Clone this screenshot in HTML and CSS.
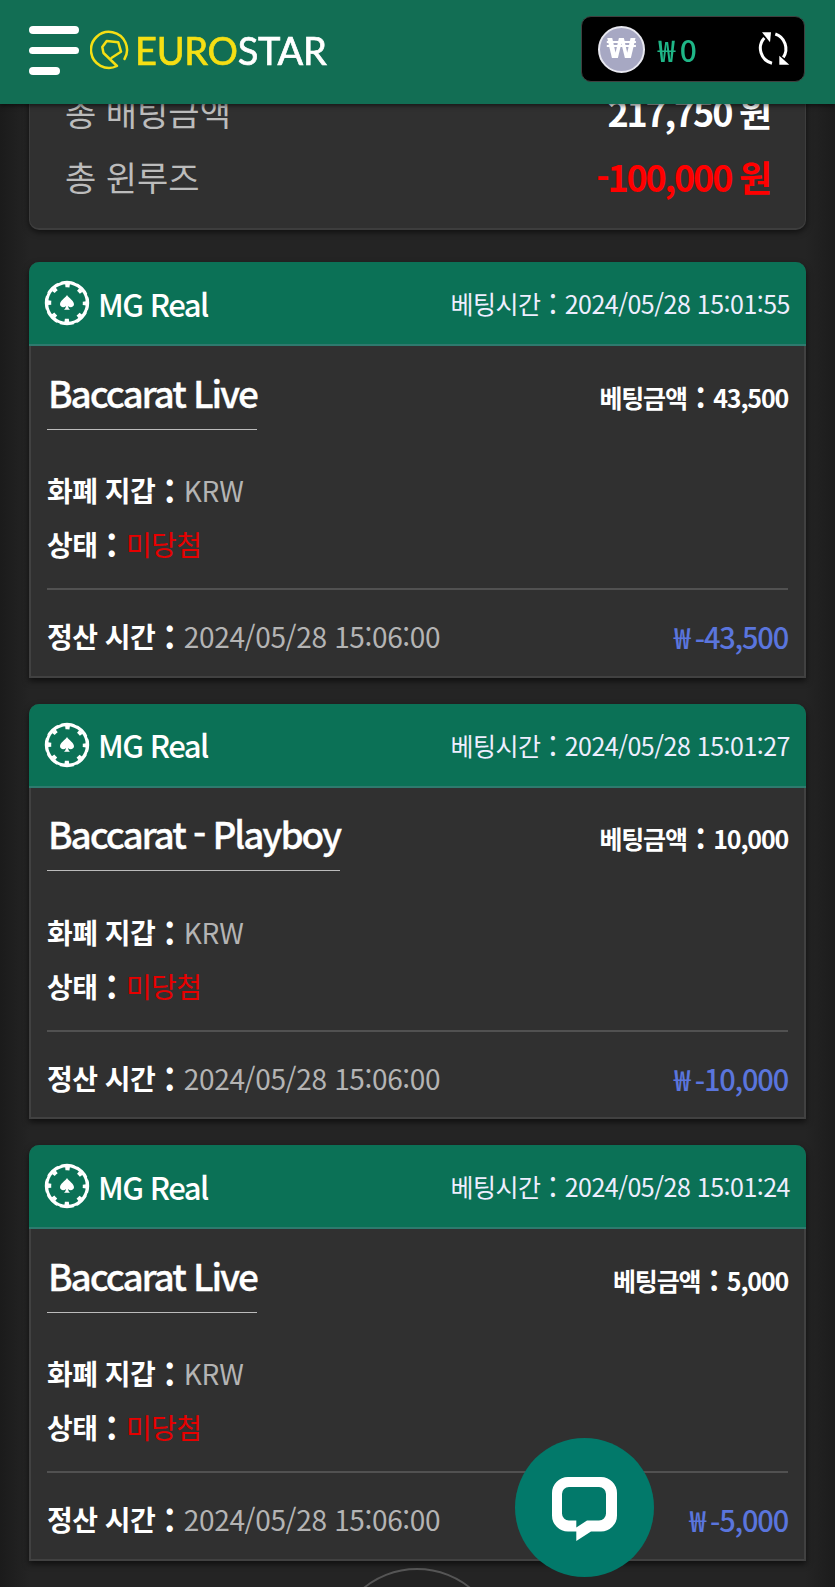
FILE: index.html
```html
<!DOCTYPE html>
<html lang="ko">
<head>
<meta charset="utf-8">
<title>EUROSTAR</title>
<link rel="stylesheet" href="styles.css">
</head>
<body>
<header class="topbar">
  <div class="menu"><span class="menu-line"></span><span class="menu-line"></span><span class="menu-line short"></span></div>
  <svg class="logo-mark" viewBox="0 0 40 40"><path d="M34.500 29A18 18 0 1 0 27 36L13.500 23 12.300 17 16.700 11 28.300 12.300 31 21.700 21.700 27.700" fill="none" stroke="#f5df14" stroke-width="2.500" stroke-linejoin="round" stroke-linecap="round"/></svg>
  <div class="logo-text"><span class="logo-euro">EURO</span><span class="logo-star">STAR</span></div>
  <div class="balance">
    <div class="coin">₩</div>
    <div class="amount">₩ 0</div>
    <svg class="refresh" viewBox="0 0 36 36"><path d="M7.300 7A15.500 15.500 0 0 0 15 32.300" fill="none" stroke="#fff" stroke-width="3"/><path d="M5 1.300h9l-1 10z" fill="#fff"/><path d="M18.300 3A15.500 15.500 0 0 1 26.300 26.300" fill="none" stroke="#fff" stroke-width="3"/><path d="M32.300 33.700h-10v-9z" fill="#fff"/></svg>
  </div>
</header>

<main class="page">
  <section class="summary">
    <div class="sum-row"><span class="sum-label">총 배팅금액</span><span class="sum-value">217,750 원</span></div>
    <div class="sum-row"><span class="sum-label">총 윈루즈</span><span class="sum-value loss">-100,000 원</span></div>
  </section>

  <article class="card">
    <div class="card-head">
      <div class="provider">
        <svg class="chip" viewBox="0 0 46 46"><use href="#chip-art"/></svg>
        <span>MG Real</span>
      </div>
      <div class="bet-time">베팅시간<span class="colon">:</span>2024/05/28 15:01:55</div>
    </div>
    <div class="card-body">
      <div class="title-row"><h2 class="game">Baccarat Live</h2><div class="stake">베팅금액<span class="colon">:</span>43,500</div></div>
      <div class="info"><b>화폐 지갑</b><span class="colon">:</span><span class="muted">KRW</span></div>
      <div class="info status"><b>상태</b><span class="colon">:</span><span class="lost">미당첨</span></div>
      <div class="card-foot"><div class="info"><b>정산 시간</b><span class="colon">:</span><span class="muted">2024/05/28 15:06:00</span></div><div class="result">₩ -43,500</div></div>
    </div>
  </article>

  <article class="card">
    <div class="card-head">
      <div class="provider">
        <svg class="chip" viewBox="0 0 46 46"><use href="#chip-art"/></svg>
        <span>MG Real</span>
      </div>
      <div class="bet-time">베팅시간<span class="colon">:</span>2024/05/28 15:01:27</div>
    </div>
    <div class="card-body">
      <div class="title-row"><h2 class="game">Baccarat - Playboy</h2><div class="stake">베팅금액<span class="colon">:</span>10,000</div></div>
      <div class="info"><b>화폐 지갑</b><span class="colon">:</span><span class="muted">KRW</span></div>
      <div class="info status"><b>상태</b><span class="colon">:</span><span class="lost">미당첨</span></div>
      <div class="card-foot"><div class="info"><b>정산 시간</b><span class="colon">:</span><span class="muted">2024/05/28 15:06:00</span></div><div class="result">₩ -10,000</div></div>
    </div>
  </article>

  <article class="card">
    <div class="card-head">
      <div class="provider">
        <svg class="chip" viewBox="0 0 46 46"><use href="#chip-art"/></svg>
        <span>MG Real</span>
      </div>
      <div class="bet-time">베팅시간<span class="colon">:</span>2024/05/28 15:01:24</div>
    </div>
    <div class="card-body">
      <div class="title-row"><h2 class="game">Baccarat Live</h2><div class="stake">베팅금액<span class="colon">:</span>5,000</div></div>
      <div class="info"><b>화폐 지갑</b><span class="colon">:</span><span class="muted">KRW</span></div>
      <div class="info status"><b>상태</b><span class="colon">:</span><span class="lost">미당첨</span></div>
      <div class="card-foot"><div class="info"><b>정산 시간</b><span class="colon">:</span><span class="muted">2024/05/28 15:06:00</span></div><div class="result">₩ -5,000</div></div>
    </div>
  </article>

  <div class="card-head next"></div>
</main>

<div class="top-btn"></div>
<div class="chat">
  <svg class="chat-icon" viewBox="0 0 66 66"><path fill-rule="evenodd" fill="#fff" d="M16 0H49a16 16 0 0 1 16 16V38.500a16 16 0 0 1-16 16H39L24.300 64V54.500H16a16 16 0 0 1-16-16V16A16 16 0 0 1 16 0zM17 10a7 7 0 0 0-7 7V36.500a7 7 0 0 0 7 7H24.300V50.500L35 43.500H47a7 7 0 0 0 7-7V17a7 7 0 0 0-7-7z"/></svg>
</div>

<svg class="defs" width="0" height="0">
  <defs>
    <g id="chip-art">
      <circle cx="23" cy="23" r="20.500" fill="none" stroke="#fff" stroke-width="3.400"/>
      <circle cx="23" cy="23" r="17.500" fill="none" stroke="#fff" stroke-width="3.400" stroke-dasharray="4.500 9.240" stroke-dashoffset="2.250"/>
      <circle cx="23" cy="23" r="22.500" fill="none" stroke="#0b7156" stroke-width="1.400" stroke-dasharray="3 14.670" stroke-dashoffset="-7.300"/>
      <path fill="#fff" d="M23 15c1.800 3.200 7 5.600 7 9.300 0 2.800-3.800 3.900-5.900 1.700.2 1.600.7 2.900 1.900 3.800h-6c1.200-.9 1.700-2.200 1.900-3.800-2.100 2.200-5.900 1.100-5.900-1.700 0-3.700 5.200-6.100 7-9.300z"/>
    </g>
  </defs>
</svg>
</body>
</html>
```
FILE: styles.css
```css
* { box-sizing: border-box; }
html, body { margin: 0; height: 100%; }
body {
  height: 1587px;
  overflow: hidden;
  background: linear-gradient(90deg, #1b1b1b 0, #242424 30px, #242424 805px, #1c1c1c 100%);
  font-family: "Noto Sans CJK KR", "Noto Sans", sans-serif;
  color: #fff;
}
.defs { display: block; }

.topbar {
  position: fixed;
  top: 0; left: 0; right: 0;
  z-index: 5;
  height: 104px;
  display: flex;
  align-items: center;
  padding: 0 29px 6px 29px;
  background: #126e54;
  box-shadow: 0 2px 4px rgba(0,0,0,.5);
}
.menu { width: 50px; display: flex; flex-direction: column; gap: 13px; margin-top: 3px; }
.menu-line { height: 7.500px; border-radius: 4px; background: #fff; }
.menu-line.short { width: 31px; }
.logo-mark { width: 40px; height: 40px; margin-left: 11px; margin-top: 2px; }
.logo-text { margin-left: 5px; font: 400 38px/1 Lato, sans-serif; letter-spacing: -.3px; -webkit-text-stroke: .7px currentColor; white-space: nowrap; margin-top: 2px; }
.logo-euro { color: #f5df14; }
.logo-star { color: #fff; }

.balance {
  margin-left: auto;
  margin-right: 1px;
  width: 224px;
  height: 66px;
  background: #000;
  border: 1px solid #3f3f3f;
  border-radius: 10px;
  display: flex;
  align-items: center;
  padding: 0 11px 0 16px;
}
.coin {
  width: 47px; height: 47px;
  border-radius: 50%;
  border: 2px solid #e8e8f0;
  background: #a7a8c3;
  color: #fff;
  font-family: "DejaVu Sans", sans-serif;
  font-size: 27px;
  font-weight: 700;
  line-height: 41px;
  text-align: center;
}
.amount { margin-left: 13px; color: #1fb687; font-size: 30px; font-weight: 500; line-height: 1; word-spacing: -2px; }
.refresh { margin-left: auto; width: 36px; height: 36px; }

.page { padding: 0 29px; display: flex; flex-direction: column; gap: 26px; }

.summary {
  height: 230px;
  margin-bottom: 6.300px;
  flex: none;
  background: #303030;
  border: 1px solid #3d3d3d;
  border-top: 0;
  border-bottom-width: 2px;
  border-radius: 0 0 10px 10px;
  box-shadow: 0 2px 6px rgba(0,0,0,.6);
  padding: 87px 35px 0 35px;
  display: flex;
  flex-direction: column;
  gap: 17px;
}
.sum-row { display: flex; justify-content: space-between; align-items: center; height: 48px; }
.sum-label { font-size: 34px; color: #bcbcbc; }
.sum-value { font-size: 36px; font-weight: 700; letter-spacing: -2.200px; }
.sum-value.loss { color: #f00; }

.card {
  height: 415.500px;
  background: #303030;
  border: 2px solid #414141;
  border-top: 0;
  border-radius: 10px 10px 0 0;
  box-shadow: 0 3px 6px rgba(0,0,0,.6);
  flex: none;
}
.card-head {
  height: 84px;
  margin: 0 -2px;
  background: #0b7156;
  border-bottom: 2px solid #2e7a6e;
  border-radius: 10px 10px 0 0;
  display: flex;
  align-items: center;
  justify-content: space-between;
  padding: 0 16px;
}
.card-head.next { flex: none; margin: 0; }
.provider { display: flex; align-items: center; gap: 8px; font-size: 31px; font-weight: 500; letter-spacing: -1.500px; }
.chip { width: 46px; height: 46px; margin-left: -1px; }
.bet-time { font-size: 25px; letter-spacing: -.5px; color: #eef; }
.colon { font-size: 1.200em; margin: 0 .3em; line-height: 1; vertical-align: -2px; }
.bet-time .colon { margin: 0 .27em; }

.card-body { padding: 0 16px; }
.title-row { display: flex; justify-content: space-between; height: 83px; align-items: center; margin-bottom: 41px; }
.game {
  margin: 0;
  font-size: 37px;
  font-weight: 500;
  letter-spacing: -2.100px;
  -webkit-text-stroke: .3px #fff;
  padding: 10px 0 0 1px;
  line-height: 73px;
  height: 84px;
  border-bottom: 1px solid #bbb;
}
.stake { font-size: 25px; font-weight: 700; letter-spacing: -1.200px; margin-top: 18px; }
.info { font-size: 28px; line-height: 40px; white-space: nowrap; }
.info b { font-weight: 700; letter-spacing: -.5px; }
.info .colon { font-weight: 700; margin: 0 .26em; vertical-align: -3px; }
.status { margin-top: 14px; }
.muted { color: #b4b4b4; font-weight: 400; letter-spacing: -.35px; }
.lost { color: #e60000; letter-spacing: -.6px; }
.card-foot {
  margin-top: 24px;
  border-top: 2px solid #515151;
  padding-top: 25px;
  display: flex;
  justify-content: space-between;
  align-items: center;
}
.result { color: #5a75dd; font-size: 29px; font-weight: 500; letter-spacing: -1.200px; }

.chat {
  position: fixed;
  left: 515px;
  top: 1438px;
  width: 139px;
  height: 139px;
  border-radius: 50%;
  background: #02796a;
  z-index: 4;
  display: flex;
  align-items: center;
  justify-content: center;
}
.chat-icon { width: 66px; height: 66px; margin: 5px 0 0; }
.top-btn {
  position: fixed;
  left: 332px;
  top: 1568px;
  width: 170px;
  height: 170px;
  border-radius: 50%;
  border: 2px solid #555;
  background: #232323;
  z-index: 3;
}
```
